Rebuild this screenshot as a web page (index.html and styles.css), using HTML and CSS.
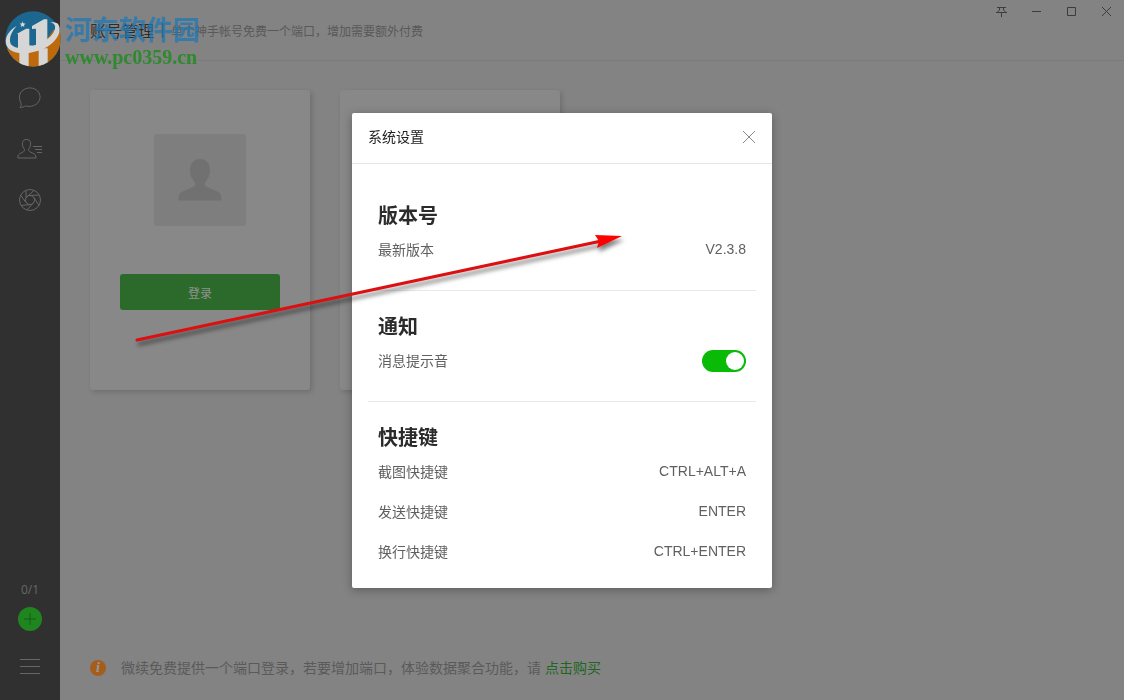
FILE: index.html
```html
<!DOCTYPE html>
<html lang="zh-CN">
<head>
    <meta charset="UTF-8">
    <meta name="viewport" content="width=device-width, initial-scale=1.0">
    <title>系统设置</title>
    <link rel="stylesheet" href="styles.css">
</head>
<body>
    <div class="app">
        <nav class="sidebar">
            <div class="side-top">
                <button class="side-btn" aria-label="消息">
                    <svg width="26" height="24" viewBox="0 0 26 24"><path d="M3 21.500c1-1 1.500-2.500 1-4.200C1.500 12 2 7 6 4.200c4.500-3.400 11-2.900 14.600.8 3.300 3.600 3.300 8.800-.2 12.200-3.200 3.100-8 3.900-12 2.700-1.500 1.100-3.300 1.600-5.400 1.600z"/></svg>
                </button>
                <button class="side-btn" aria-label="联系人">
                    <svg width="26" height="24" viewBox="0 0 26 24"><path d="M7.500 12.500C5.500 10 5.200 7.500 5.500 5.500 6 3.300 7.500 2.500 9.500 2.500s3.500.8 4 3c.3 2 0 4.500-2 7 0 2 1.500 2.400 4 3.500 2.300 1 3.500 2 3.500 5H.800c0-3 1-4 3.300-5 2.400-1.100 3.400-1.500 3.400-3.500zM16 9.500h9M18 12.500h7M20 15.500h5"/></svg>
                </button>
                <button class="side-btn" aria-label="朋友圈">
                    <svg width="26" height="24" viewBox="0 0 26 24"><circle cx="13" cy="12" r="10.500"/><circle cx="13" cy="12" r="4.500"/><path d="M9.500 9.200L17 2.500M13 7.500l9-.5M17 9.500l5 8M17 14l-7 8M13.500 16.500L4 17.500M9 14.500L3.500 7M9 10V3"/></svg>
                </button>
            </div>
            <div class="side-bottom">
                <span class="count">0/1</span>
                <button class="add" aria-label="添加账号">
                    <svg width="14" height="14" viewBox="0 0 14 14"><path d="M7 1v12M1 7h12"/></svg>
                </button>
                <button class="menu" aria-label="菜单">
                    <svg width="20" height="16" viewBox="0 0 20 16"><path d="M0 1.500h20M0 8.500h20M0 15.500h20"/></svg>
                </button>
            </div>
        </nav>

        <main class="main">
            <header class="top">
                <h1>账号管理</h1>
                <span class="bar">|</span>
                <p>单个神手帐号免费一个端口，增加需要额外付费</p>
            </header>

            <section class="cards">
                <div class="card">
                    <div class="avatar">
                        <svg width="44" height="42" viewBox="0 0 44 42"><path d="M22 0c6 0 10 4 10 11 0 6-2.500 9.500-5 12.500v3c2 2 8 4 11.500 5.500 4 1.800 5 4 5 9.500H.500c0-5.500 1-7.700 5-9.500C9 30.500 15 28.500 17 26.500v-3C14.500 20.500 12 17 12 11 12 4 16 0 22 0z"/></svg>
                    </div>
                    <button class="login">登录</button>
                </div>
                <div class="card"></div>
            </section>

            <footer class="tip">
                <span class="info">i</span>
                <p>微续免费提供一个端口登录，若要增加端口，体验数据聚合功能，请 <a href="#">点击购买</a></p>
            </footer>
        </main>
    </div>

    <div class="window-btns">
        <button aria-label="置顶"><svg width="11" height="11" viewBox="0 0 11 11"><path d="M1 1.500h9M0 6.500h11M5.500 6.500V11M3.500 2v2L1.500 6M7.500 2v2l2 2"/></svg></button>
        <button aria-label="最小化"><svg width="11" height="11" viewBox="0 0 11 11"><path d="M1 5.500h9"/></svg></button>
        <button aria-label="最大化"><svg width="11" height="11" viewBox="0 0 11 11"><path d="M1.500 1.500h8v8h-8z"/></svg></button>
        <button aria-label="关闭"><svg width="11" height="11" viewBox="0 0 11 11"><path d="M1 1l9 9M10 1l-9 9"/></svg></button>
    </div>

    <div class="overlay">
        <div class="modal" role="dialog" aria-labelledby="modal-title">
            <div class="modal-head">
                <h2 id="modal-title">系统设置</h2>
                <button class="close" aria-label="关闭">
                    <svg width="14" height="14" viewBox="0 0 14 14"><path d="M1 1l12 12M13 1L1 13"/></svg>
                </button>
            </div>
            <div class="modal-body">
                <section class="group">
                    <h3>版本号</h3>
                    <div class="row"><span>最新版本</span><span>V2.3.8</span></div>
                </section>
                <section class="group">
                    <h3>通知</h3>
                    <div class="row">
                        <label for="sound">消息提示音</label>
                        <input class="switch" type="checkbox" id="sound" checked>
                    </div>
                </section>
                <section class="group">
                    <h3>快捷键</h3>
                    <div class="row"><span>截图快捷键</span><span>CTRL+ALT+A</span></div>
                    <div class="row"><span>发送快捷键</span><span>ENTER</span></div>
                    <div class="row"><span>换行快捷键</span><span>CTRL+ENTER</span></div>
                </section>
            </div>
        </div>
    </div>

    <div class="watermark">
        <svg width="57" height="58" viewBox="15 30 171 174">
            <defs>
                <clipPath id="disc"><circle cx="99" cy="117" r="83"/></clipPath>
            </defs>
            <g clip-path="url(#disc)">
                <path fill="#1c678f" d="M10 20h180v185H10z"/>
                <path fill="#bd6a0d" d="M10 140q90 50 150-50h30v120H10z"/>
                <path fill="#d6d6d6" d="M58 155h28v50H58zM116 145h27v60h-27z"/>
            </g>
            <path fill="#d6d6d6" d="M50 102l28-16h10v50q10 2 20-2V86l-12 1V78l36-20h10v68q-36 26-88 22v-46z"/>
            <path fill="#d6d6d6" d="M68 64l2 6 7 1-5 4 1 6-5-3-6 3 2-6-5-4 7-1z"/>
            <path fill="#d6d6d6" d="M50 78C18 96 8 128 26 146c24 22 76 16 116-6 34-20 46-54 30-70-6-4-14-4-22-3 14 4 18 10 14 22-6 20-32 40-66 50-30 8-58 6-66-8-6-14 0-34 18-53z"/>
        </svg>
        <div class="watermark-text">
            <strong>河东软件园</strong>
            <span>www.pc0359.cn</span>
        </div>
    </div>

    <svg class="arrow" width="500" height="130" viewBox="0 0 500 130">
        <path d="M7 110L476 10" stroke="#dc1010" stroke-width="3" stroke-linecap="round"/>
        <path d="M465 5l27 1-25 12 2-7z" fill="#f00"/>
    </svg>
</body>
</html>
```
FILE: styles.css
```css
* {
    box-sizing: border-box;
}
body {
    margin: 0;
    font-family: "Liberation Sans", "Noto Sans CJK SC", sans-serif;
    font-size: 14px;
    background-color: #838383;
}
h1, h2, h3, p {
    margin: 0;
    font-weight: normal;
}
button {
    display: flex;
    align-items: center;
    justify-content: center;
    padding: 0;
    border: none;
    background: none;
    font-family: inherit;
    cursor: pointer;
}
svg {
    fill: none;
}
.app {
    display: flex;
    min-height: 100vh;
}

/* sidebar */
.sidebar {
    display: flex;
    flex-direction: column;
    justify-content: space-between;
    width: 60px;
    padding: 72px 0 20px;
    background-color: #303030;
}
.sidebar svg {
    stroke: #666;
}
.side-btn {
    width: 60px;
    height: 51px;
}
.side-bottom {
    display: flex;
    flex-direction: column;
    align-items: center;
}
.count {
    font-family: "Open Sans", sans-serif;
    font-size: 12px;
    line-height: 18px;
    color: #686868;
}
.add {
    width: 24px;
    height: 24px;
    margin: 8px 0 21px;
    border-radius: 50%;
    background-color: #1f861f;
}
.sidebar .add svg {
    stroke: #175c17;
}
.menu {
    width: 60px;
    height: 28px;
}

/* page */
.main {
    display: flex;
    flex: 1;
    flex-direction: column;
}
.top {
    display: flex;
    align-items: center;
    height: 60px;
    padding: 0 30px;
    box-shadow: 0 1px #7b7b7b;
}
.top h1 {
    font-size: 16px;
    color: #2c2c2c;
}
.bar {
    width: 17px;
    text-align: center;
    font-size: 16px;
    color: #333;
}
.top p {
    font-size: 12px;
    color: #595959;
}
.cards {
    display: flex;
    flex: 1;
    gap: 30px;
    padding: 30px;
}
.card {
    display: flex;
    flex-direction: column;
    align-items: center;
    width: 220px;
    height: 300px;
    padding-top: 44px;
    border-radius: 3px;
    background-color: #888;
    box-shadow: 2px 2px 5px rgba(0, 0, 0, 0.16);
}
.avatar {
    display: flex;
    align-items: center;
    justify-content: center;
    width: 92px;
    height: 92px;
    margin-bottom: 48px;
    border-radius: 3px;
    background-color: #7e7e7e;
}
.avatar path {
    fill: #717171;
}
.login {
    width: 160px;
    height: 36px;
    border-radius: 3px;
    background-color: #2b6a2b;
    font-size: 12px;
    color: #929292;
}
.tip {
    display: flex;
    align-items: center;
    height: 64px;
    padding: 0 30px;
    color: #5a5a5a;
}
.tip p {
    line-height: 20px;
}
.tip a {
    color: #206620;
    text-decoration: none;
}
.info {
    width: 16px;
    height: 16px;
    margin-right: 15px;
    border-radius: 50%;
    background-color: #a55d1d;
    font: italic bold 14px/16px "Liberation Serif", serif;
    text-align: center;
    color: #999;
}

.window-btns {
    position: absolute;
    top: 0;
    right: 0;
    display: flex;
}
.window-btns button {
    width: 35px;
    height: 22px;
}
.window-btns svg {
    stroke: #3c3c3c;
}

/* settings dialog */
.overlay {
    position: fixed;
    inset: 0;
    display: flex;
    align-items: center;
    justify-content: center;
}
.modal {
    width: 420px;
    border-radius: 2px;
    background-color: #fff;
    box-shadow: 0 2px 10px rgba(0, 0, 0, 0.3);
}
.modal-head {
    display: flex;
    align-items: center;
    justify-content: space-between;
    height: 51px;
    padding: 0 16px 2px;
    border-bottom: 1px solid #e6e6e6;
}
.modal-head h2 {
    padding-bottom: 2px;
    font-size: 14px;
    color: #222;
}
.close svg {
    stroke: #888;
}
.modal-body {
    padding: 16px;
}
.group {
    padding: 21px 10px 19px;
    border-bottom: 1px solid #e8e8e8;
}
.group:last-child {
    padding-bottom: 0;
    margin-bottom: -1px;
    border-bottom: none;
}
.group h3 {
    font-size: 20px;
    font-weight: bold;
    line-height: 30px;
    color: #2b2b2b;
}
.row {
    display: flex;
    align-items: center;
    justify-content: space-between;
    height: 40px;
    padding-bottom: 2px;
    color: #606060;
}
.row span, .row label {
    padding-bottom: 2px;
}
.switch {
    appearance: none;
    display: flex;
    justify-content: flex-end;
    width: 44px;
    height: 22px;
    margin: 0;
    padding: 2px;
    border-radius: 11px;
    background-color: #09bb07;
}
.switch::before {
    content: "";
    width: 18px;
    height: 18px;
    border-radius: 50%;
    background-color: #fff;
}
.switch:not(:checked) {
    justify-content: flex-start;
    background-color: #ccc;
}

/* lies over everything */
.watermark {
    position: absolute;
    top: 10px;
    left: 5px;
    display: flex;
    gap: 3px;
    pointer-events: none;
}
.watermark-text {
    display: flex;
    flex-direction: column;
    padding-top: 4px;
}
.watermark strong {
    font-family: "Noto Sans CJK SC", sans-serif;
    font-size: 27px;
    line-height: 30px;
    color: rgba(31, 120, 180, 0.75);
}
.watermark span {
    font: bold 20px/26px "Liberation Serif", serif;
    color: #2d8a2d;
}
.arrow {
    position: absolute;
    top: 230px;
    left: 130px;
    filter: drop-shadow(2px 4px 2px rgba(0, 0, 0, 0.5));
    pointer-events: none;
}
```
